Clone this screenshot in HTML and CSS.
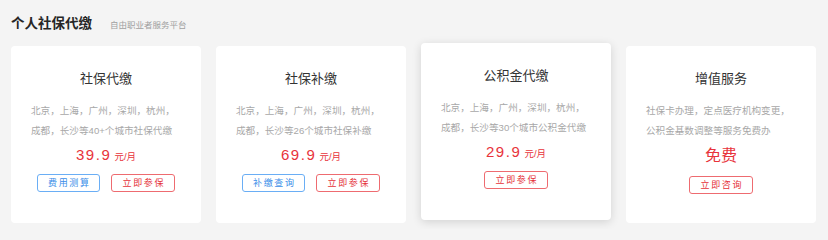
FILE: index.html
```html
<!DOCTYPE html>
<html lang="zh-CN">
<head>
<meta charset="utf-8">
<title>个人社保代缴</title>
<link rel="stylesheet" href="styles.css">
</head>
<body>
<div class="page">
  <div class="header">
    <h1 class="header-title">个人社保代缴</h1>
    <span class="header-sub">自由职业者服务平台</span>
  </div>
  <div class="cards">
    <div class="card">
      <div class="card-title">社保代缴</div>
      <p class="card-desc">北京，上海，广州，深圳，杭州，<br>成都，长沙等40+个城市社保代缴</p>
      <div class="price"><span class="price-num">39.9</span><span class="price-unit">元/月</span></div>
      <div class="actions">
        <a class="btn btn-blue">费用测算</a>
        <a class="btn btn-red">立即参保</a>
      </div>
    </div>
    <div class="card">
      <div class="card-title">社保补缴</div>
      <p class="card-desc">北京，上海，广州，深圳，杭州，<br>成都，长沙等26个城市社保补缴</p>
      <div class="price"><span class="price-num">69.9</span><span class="price-unit">元/月</span></div>
      <div class="actions">
        <a class="btn btn-blue">补缴查询</a>
        <a class="btn btn-red">立即参保</a>
      </div>
    </div>
    <div class="card card-raised">
      <div class="card-title">公积金代缴</div>
      <p class="card-desc">北京，上海，广州，深圳，杭州，<br>成都，长沙等30个城市公积金代缴</p>
      <div class="price"><span class="price-num">29.9</span><span class="price-unit">元/月</span></div>
      <div class="actions">
        <a class="btn btn-red">立即参保</a>
      </div>
    </div>
    <div class="card">
      <div class="card-title">增值服务</div>
      <p class="card-desc">社保卡办理，定点医疗机构变更，<br>公积金基数调整等服务免费办</p>
      <div class="price price-free"><span class="free">免费</span></div>
      <div class="actions">
        <a class="btn btn-red">立即咨询</a>
      </div>
    </div>
  </div>
</div>
</body>
</html>
```

FILE: styles.css
```css
* {
  box-sizing: border-box;
}

html, body {
  margin: 0;
  padding: 0;
}

body {
  background: #f4f4f4;
  font-family: "Liberation Sans", "Noto Sans CJK SC", sans-serif;
  color: #333;
}

.page {
  width: 828px;
  height: 229px;
  overflow: hidden;
}

.header {
  display: flex;
  align-items: baseline;
  padding: 14px 11px 0;
  height: 34px;
  margin-bottom: 12px;
}

.header-title {
  margin: 0;
  font-size: 13.5px;
  line-height: 20px;
  font-weight: bold;
  color: #262626;
}

.header-sub {
  margin-left: 18px;
  font-size: 8.5px;
  color: #a0a0a0;
}

.cards {
  display: flex;
  gap: 15px;
  padding: 0 11px;
}

.card {
  width: 190px;
  height: 177px;
  flex: none;
  background: #fff;
  border-radius: 4px;
  padding: 23px 20px 0;
}

.card-raised {
  transform: translateY(-3px);
  box-shadow: 0 2px 10px rgba(0, 0, 0, 0.14);
}

.card-title {
  text-align: center;
  font-size: 13px;
  line-height: 20px;
  color: #333;
}

.card-desc {
  margin: 12px 0 0;
  font-size: 9.6px;
  line-height: 20px;
  color: #a8a8a8;
  white-space: nowrap;
}

.price {
  margin-top: 4px;
  height: 20px;
  line-height: 20px;
  text-align: center;
  color: #e8333b;
  white-space: nowrap;
}

.price-num {
  font-size: 15px;
  letter-spacing: 1.6px;
}

.price-unit {
  margin-left: 3px;
  font-size: 9.5px;
}

.price-free {
  height: 22px;
  line-height: 22px;
}

.free {
  font-size: 16px;
}

.actions {
  display: flex;
  justify-content: center;
  gap: 11px;
  margin-top: 9px;
}

.btn {
  display: block;
  width: 63px;
  height: 18px;
  line-height: 16px;
  border: 1px solid;
  border-radius: 3px;
  text-align: center;
  font-size: 9px;
  letter-spacing: 1.7px;
  padding-left: 1.7px;
  cursor: pointer;
}

.btn-blue {
  color: #3a8ee8;
  border-color: #6aaef5;
}

.btn-red {
  width: 64px;
  color: #e5323a;
  border-color: #ee6b70;
}
```
